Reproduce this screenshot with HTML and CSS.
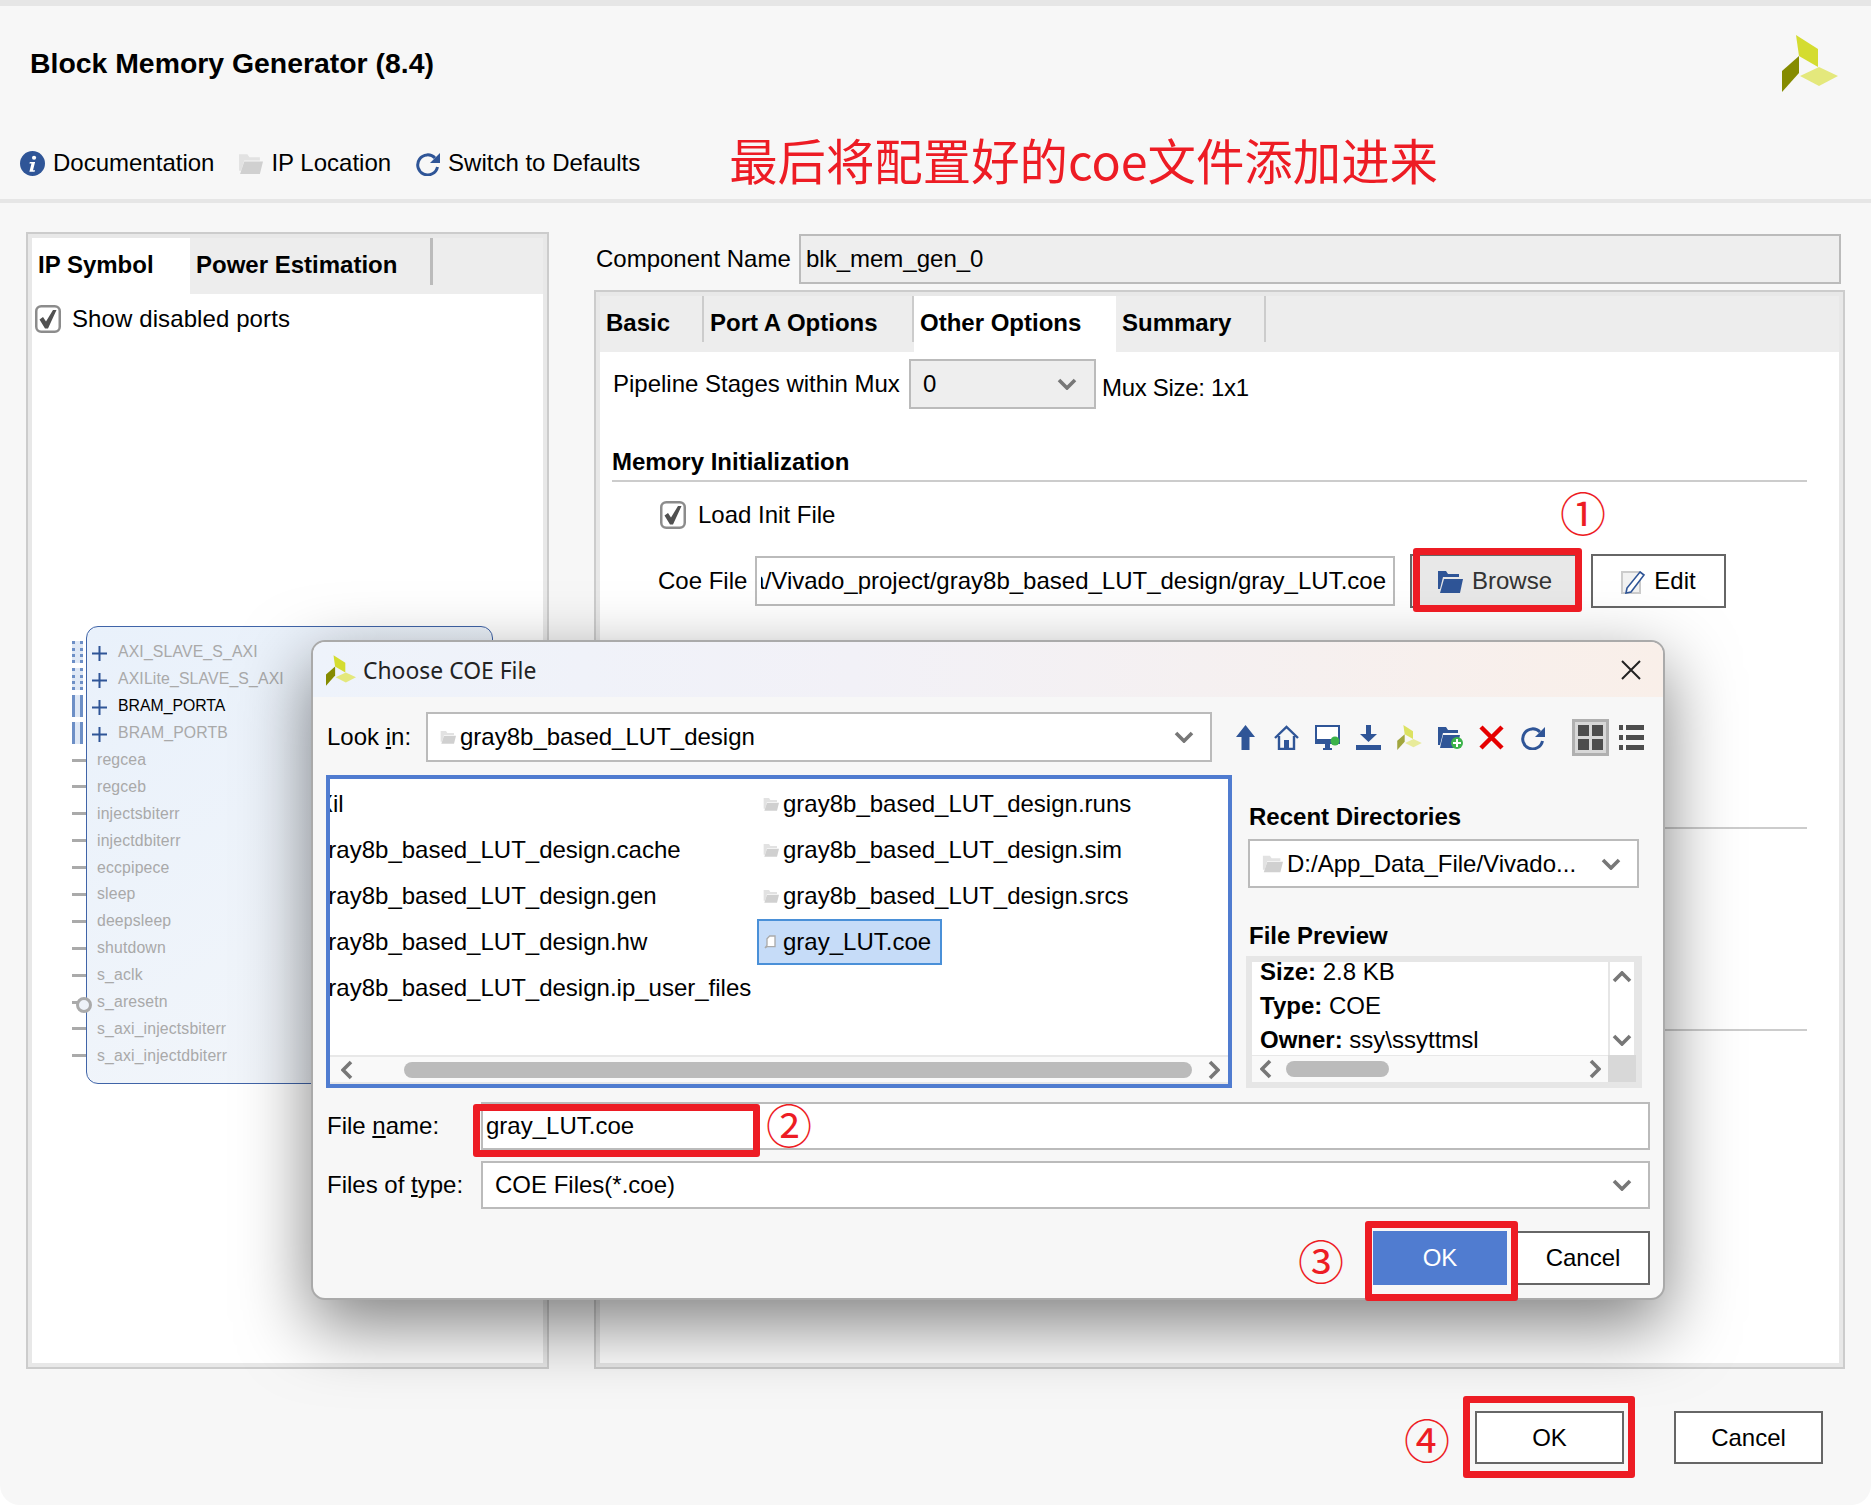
FILE: index.html
```html
<!DOCTYPE html>
<html>
    <head>
        <title>Block Memory Generator</title>
        <link rel="stylesheet" href="styles.css">
    </head>
    <body>
        <svg class="sprite" xmlns="http://www.w3.org/2000/svg">
            <symbol id="logo" viewBox="0 0 56 57">
                <polygon fill="#d4dc30" points="14,0 36,14 36,32 17,21"/>
                <polygon fill="#858b00" points="17,21 17,38 0,57 0,36"/>
                <polygon fill="#e4e87c" points="37,32 56,41 37,51 18,41"/>
            </symbol>
            <symbol id="folder-gray" viewBox="0 0 24 24">
                <path fill="#e2e2e2" d="M1 3h8l2 3h10v3H6L3 19H1z"/>
                <path fill="#d0d0d0" d="M6 10h18l-3 12H2z"/>
            </symbol>
            <symbol id="folder-blue" viewBox="0 0 25 25">
                <path fill="#2f5597" d="M0 2h8l2 3h11v3H5L2 20H0z"/>
                <path fill="#2f5597" d="M6 10h19l-3 14H2z"/>
            </symbol>
            <symbol id="chev-d" viewBox="0 0 20 12"><polyline fill="none" stroke="#777" stroke-width="3.6" points="2,2 10,10 18,2"/></symbol>
            <symbol id="chev-u" viewBox="0 0 20 12"><polyline fill="none" stroke="#777" stroke-width="3.6" points="2,10 10,2 18,10"/></symbol>
            <symbol id="chev-l" viewBox="0 0 12 20"><polyline fill="none" stroke="#777" stroke-width="3.6" points="10,2 2,10 10,18"/></symbol>
            <symbol id="chev-r" viewBox="0 0 12 20"><polyline fill="none" stroke="#777" stroke-width="3.6" points="2,2 10,10 2,18"/></symbol>
            <symbol id="check" viewBox="0 0 26 28">
                <rect x="1.250" y="1.250" width="23.500" height="25.500" rx="5" fill="#fff" stroke="#8c8c8c" stroke-width="2.500"/>
                <path fill="#505050" d="M4.500 14.500l3.500-2.500 3 4.500L18 5h3.500l-8.500 18.500h-3z"/>
            </symbol>
            <symbol id="plus" viewBox="0 0 15 15"><path fill="#2f5597" d="M6.500 0h2v6.500h6.500v2H8.500v6.500h-2V8.500H0v-2h6.500z"/></symbol>
            <symbol id="refresh" viewBox="0 0 25 25">
                <path fill="none" stroke="#2f5597" stroke-width="3" d="M20 7A10 10 0 1 0 22.500 16"/>
                <polygon fill="#2f5597" points="25,2 25,12 15,12"/>
            </symbol>
        </svg>

        <div class="window">
            <header class="head">
                <h1>Block Memory Generator (8.4)</h1>
                <svg class="logo"><use href="#logo"/></svg>
            </header>

            <div class="toolbar">
                <span class="tool">
                    <svg class="tool-icon" viewBox="0 0 24 24">
                        <circle cx="12" cy="12" r="12" fill="#2f5597"/>
                        <circle cx="13.500" cy="6.500" r="2" fill="#fff"/>
                        <path fill="#fff" d="M9.500 10.500h5l-2 8h2l-.5 1.500H9l2-8H9z"/>
                    </svg>
                    Documentation
                </span>
                <span class="tool"><svg class="tool-icon"><use href="#folder-gray"/></svg>IP Location</span>
                <span class="tool"><svg class="tool-icon"><use href="#refresh"/></svg>Switch to Defaults</span>
                <span class="note">最后将配置好的coe文件添加进来</span>
            </div>

            <div class="main">
                <section class="panel left-panel">
                    <div class="tabs">
                        <span class="tab active symbol-tab">IP Symbol</span>
                        <span class="tab power-tab">Power Estimation</span>
                    </div>
                    <div class="tab-body">
                        <label class="check-row ports-check"><svg class="checkbox"><use href="#check"/></svg>Show disabled ports</label>
                        <div class="symbol">
                            <div class="pin"><i class="stub dotted"></i><svg class="plus"><use href="#plus"/></svg><span>AXI_SLAVE_S_AXI</span></div>
                            <div class="pin"><i class="stub dotted"></i><svg class="plus"><use href="#plus"/></svg><span>AXILite_SLAVE_S_AXI</span></div>
                            <div class="pin on"><i class="stub solid"></i><svg class="plus"><use href="#plus"/></svg><span>BRAM_PORTA</span></div>
                            <div class="pin"><i class="stub solid"></i><svg class="plus"><use href="#plus"/></svg><span>BRAM_PORTB</span></div>
                            <div class="pin"><i class="dash"></i><span>regcea</span></div>
                            <div class="pin"><i class="dash"></i><span>regceb</span></div>
                            <div class="pin"><i class="dash"></i><span>injectsbiterr</span></div>
                            <div class="pin"><i class="dash"></i><span>injectdbiterr</span></div>
                            <div class="pin"><i class="dash"></i><span>eccpipece</span></div>
                            <div class="pin"><i class="dash"></i><span>sleep</span></div>
                            <div class="pin"><i class="dash"></i><span>deepsleep</span></div>
                            <div class="pin"><i class="dash"></i><span>shutdown</span></div>
                            <div class="pin"><i class="dash"></i><span>s_aclk</span></div>
                            <div class="pin"><i class="dash low"></i><span>s_aresetn</span></div>
                            <div class="pin"><i class="dash"></i><span>s_axi_injectsbiterr</span></div>
                            <div class="pin"><i class="dash"></i><span>s_axi_injectdbiterr</span></div>
                        </div>
                    </div>
                </section>

                <div class="right-col">
                    <div class="name-row">
                        <span class="name-label">Component Name</span>
                        <div class="field grey name-field">blk_mem_gen_0</div>
                    </div>
                    <section class="panel right-panel">
                        <div class="tabs">
                            <span class="tab sep basic-tab">Basic</span>
                            <span class="tab sep porta-tab">Port A Options</span>
                            <span class="tab active other-tab">Other Options</span>
                            <span class="tab sep summary-tab">Summary</span>
                        </div>
                        <div class="tab-body">
                            <div class="mux-row">
                                <span class="mux-label">Pipeline Stages within Mux</span>
                                <div class="field grey mux-select">0<svg class="chev"><use href="#chev-d"/></svg></div>
                                <span class="mux-size">Mux Size: 1x1</span>
                            </div>
                            <h3 class="section-head">Memory Initialization</h3>
                            <label class="check-row load-check"><svg class="checkbox"><use href="#check"/></svg>Load Init File</label>
                            <div class="coe-row">
                                <span class="coe-label">Coe File</span>
                                <div class="field coe-field"><span class="coe-path"><span>D:/App_Data/Vivado_project/gray8b_based_LUT_design/gray_LUT.coe</span></span></div>
                                <button class="btn browse-btn"><svg class="btn-icon"><use href="#folder-blue"/></svg>Browse</button>
                                <button class="btn edit-btn">
                                    <svg class="btn-icon" viewBox="0 0 25 25">
                                        <rect x="1" y="3" width="18" height="21" fill="#f2f2f2" stroke="#ccc" stroke-width="2"/>
                                        <path fill="#fff" stroke="#2f5597" stroke-width="1.600" d="M19 3l4 3L10 23l-5 1 1-5z"/>
                                    </svg>
                                    Edit
                                </button>
                            </div>
                            <div class="section-line first-line"></div>
                            <div class="section-line second-line"></div>
                        </div>
                    </section>
                </div>
            </div>

            <footer class="foot">
                <button class="btn foot-btn">OK</button>
                <button class="btn foot-btn">Cancel</button>
            </footer>

            <div class="dialog">
                <div class="dialog-title">
                    <svg class="dialog-logo"><use href="#logo"/></svg>
                    <span>Choose COE File</span>
                    <svg class="close" viewBox="0 0 20 20"><path stroke="#222" stroke-width="2" d="M1 1l18 18M19 1L1 19"/></svg>
                </div>
                <div class="dialog-body">
                    <div class="look-row">
                        <span class="look-label">Look <u>i</u>n:</span>
                        <div class="field combo look-combo">
                            <svg class="small-folder"><use href="#folder-gray"/></svg>gray8b_based_LUT_design
                            <svg class="chev"><use href="#chev-d"/></svg>
                        </div>
                        <div class="file-tools">
                            <svg class="ft" viewBox="0 0 25 25"><polygon fill="#2f5597" points="12.500,0 22,12 16.500,12 16.500,25 8.500,25 8.500,12 3,12"/></svg>
                            <svg class="ft" viewBox="0 0 25 25">
                                <path fill="none" stroke="#2f5597" stroke-width="2.400" d="M1 13L12.500 2 24 13M5 11v13h15V11"/>
                                <rect x="10" y="15" width="5" height="9" fill="#2f5597"/>
                            </svg>
                            <svg class="ft" viewBox="0 0 25 25">
                                <rect width="25" height="19" fill="#2f5597"/>
                                <rect x="2" y="2" width="21" height="12" fill="#fff"/>
                                <rect x="10" y="19" width="5" height="4" fill="#2f5597"/>
                                <rect x="8" y="23" width="9" height="2" fill="#2f5597"/>
                                <circle cx="20" cy="16" r="4.500" fill="#3cb34a"/>
                            </svg>
                            <svg class="ft" viewBox="0 0 25 25">
                                <rect x="10" width="5" height="9" fill="#2f5597"/>
                                <polygon fill="#2f5597" points="4,9 21,9 12.500,17"/>
                                <rect y="20" width="25" height="5" fill="#2f5597"/>
                            </svg>
                            <svg class="ft faded"><use href="#logo"/></svg>
                            <svg class="ft" viewBox="0 0 25 25">
                                <path fill="#2f5597" d="M0 2h8l2 3h10v3H5L2 20H0z"/>
                                <path fill="#2f5597" d="M5 10h17l-3 13H2z"/>
                                <circle cx="19" cy="18" r="6" fill="#3cb34a"/>
                                <path fill="#fff" d="M18 14h2v3h3v2h-3v3h-2v-3h-3v-2h3z"/>
                            </svg>
                            <svg class="ft" viewBox="0 0 25 25"><path stroke="#e60000" stroke-width="4.500" d="M2 2l21 21M23 2L2 23"/></svg>
                            <svg class="ft"><use href="#refresh"/></svg>
                            <svg class="view-grid" viewBox="0 0 37 37">
                                <rect width="37" height="37" fill="#b0b0b0"/>
                                <rect x="3" y="3" width="31" height="31" fill="#d8d8d8"/>
                                <path fill="#4d4d4d" d="M6 6h11v11H6zM20 6h11v11H20zM6 20h11v11H6zM20 20h11v11H20z"/>
                            </svg>
                            <svg class="view-list" viewBox="0 0 25 25">
                                <path fill="#4d4d4d" d="M0 0h4v5H0zM7 0h18v5H7zM0 10h4v5H0zM7 10h18v5H7zM0 20h4v5H0zM7 20h18v5H7z"/>
                            </svg>
                        </div>
                    </div>

                    <div class="browse-row">
                        <div class="file-list">
                            <div class="file-cols">
                                <div class="file-col clipped">
                                    <div class="file xil">Xil</div>
                                    <div class="file">gray8b_based_LUT_design.cache</div>
                                    <div class="file">gray8b_based_LUT_design.gen</div>
                                    <div class="file">gray8b_based_LUT_design.hw</div>
                                    <div class="file">gray8b_based_LUT_design.ip_user_files</div>
                                </div>
                                <div class="file-col">
                                    <div class="file"><svg class="file-icon"><use href="#folder-gray"/></svg>gray8b_based_LUT_design.runs</div>
                                    <div class="file"><svg class="file-icon"><use href="#folder-gray"/></svg>gray8b_based_LUT_design.sim</div>
                                    <div class="file"><svg class="file-icon"><use href="#folder-gray"/></svg>gray8b_based_LUT_design.srcs</div>
                                    <div class="file selected">
                                        <svg class="file-icon" viewBox="0 0 24 24"><path fill="#fff" stroke="#aaa" stroke-width="2" d="M10 3h8v16H6l-3 2 3-4V7z"/></svg>gray_LUT.coe
                                    </div>
                                </div>
                            </div>
                            <div class="hscroll">
                                <svg class="arrow-h"><use href="#chev-l"/></svg>
                                <div class="thumb list-thumb"></div>
                                <svg class="arrow-h"><use href="#chev-r"/></svg>
                            </div>
                        </div>

                        <div class="side">
                            <h4 class="recent-head">Recent Directories</h4>
                            <div class="field combo recent-combo">
                                <svg class="small-folder wide"><use href="#folder-gray"/></svg>D:/App_Data_File/Vivado...
                                <svg class="chev"><use href="#chev-d"/></svg>
                            </div>
                            <h4 class="preview-head">File Preview</h4>
                            <div class="preview">
                                <div class="preview-text">
                                    <div><b>Size:</b> 2.8 KB</div>
                                    <div><b>Type:</b> COE</div>
                                    <div><b>Owner:</b> ssy\ssyttmsl</div>
                                </div>
                                <div class="vscroll">
                                    <svg class="arrow-v"><use href="#chev-u"/></svg>
                                    <svg class="arrow-v"><use href="#chev-d"/></svg>
                                </div>
                                <div class="hscroll small">
                                    <svg class="arrow-h"><use href="#chev-l"/></svg>
                                    <div class="thumb preview-thumb"></div>
                                    <svg class="arrow-h"><use href="#chev-r"/></svg>
                                </div>
                                <div class="corner"></div>
                            </div>
                        </div>
                    </div>

                    <div class="form-row name-line">
                        <span class="form-label">File <u>n</u>ame:</span>
                        <div class="field form-field">gray_LUT.coe</div>
                    </div>
                    <div class="form-row type-line">
                        <span class="form-label">Files of <u>t</u>ype:</span>
                        <div class="field combo form-field type-field">COE Files(*.coe)<svg class="chev"><use href="#chev-d"/></svg></div>
                    </div>
                    <div class="dialog-buttons">
                        <button class="btn primary">OK</button>
                        <button class="btn cancel">Cancel</button>
                    </div>
                </div>
            </div>

            <!-- red annotations drawn on top of the screenshot -->
            <div class="mark mark-browse"></div>
            <div class="mark mark-name"></div>
            <div class="mark mark-ok"></div>
            <div class="mark mark-foot"></div>
            <span class="num num-1">①</span>
            <span class="num num-2">②</span>
            <span class="num num-3">③</span>
            <span class="num num-4">④</span>
        </div>
    </body>
</html>
```

FILE: styles.css
```css
* {
    margin: 0;
    padding: 0;
    box-sizing: border-box;
}

body {
    background: #fff;
    font-family: "Liberation Sans", Arial, sans-serif;
    font-size: 24px;
    color: #000;
}

svg {
    display: block;
    flex: none;
}

.sprite {
    width: 0;
    height: 0;
    position: absolute;
}

.window {
    position: relative;
    width: 1871px;
    height: 1505px;
    overflow: hidden;
    background: #f7f7f7;
    border-top: 6px solid #e6e6e6;
    border-radius: 0 0 20px 20px;
}

.head {
    display: flex;
    align-items: center;
    justify-content: space-between;
    height: 115px;
    padding: 0 33px 0 30px;
}

h1 {
    font-size: 28.4px;
    font-weight: bold;
}

.logo {
    width: 56px;
    height: 57px;
}

.toolbar {
    display: flex;
    align-items: center;
    gap: 24px;
    height: 82px;
    padding: 6px 0 0 20px;
    border-bottom: 4px solid #e6e6e6;
}

.tool {
    display: flex;
    align-items: center;
    gap: 8px;
}

.tool-icon {
    width: 25px;
    height: 25px;
}

.note {
    margin: -8px 0 0 65px;
    font-family: "Noto Sans CJK SC", sans-serif;
    font-size: 48.4px;
    line-height: 60px;
    color: #ed1c24;
}

.main {
    display: flex;
    padding: 29px 26px 0;
    gap: 45px;
}

.panel {
    display: flex;
    flex-direction: column;
    border: 2px solid #ccc;
    padding: 4px;
    background: #e8e8e8;
}

.left-panel {
    width: 523px;
    height: 1137px;
}

.tabs {
    display: flex;
    height: 56px;
    background: #ededed;
    font-weight: bold;
    flex: none;
}

.tab {
    height: 56px;
    padding: 0 0 2px 6px;
    line-height: 54px;
}

.tab.active {
    background: #fff;
}

.tab.sep {
    height: 46px;
    border-right: 2px solid #ccc;
}

.symbol-tab {
    width: 158px;
}

.power-tab {
    width: 243px;
    height: 47px;
    line-height: 54px;
    border-right: 3px solid #bbb;
}

.basic-tab {
    width: 104px;
}

.porta-tab {
    width: 210px;
}

.other-tab {
    width: 202px;
}

.summary-tab {
    width: 150px;
}

.tab-body {
    flex: 1;
    background: #fff;
}

.check-row {
    display: flex;
    align-items: center;
    height: 28px;
}

.checkbox {
    width: 26px;
    height: 28px;
    margin-right: 11px;
}

.ports-check {
    margin: 11px 0 0 3px;
    letter-spacing: 0.1px;
}

/* ip symbol block */
.symbol {
    width: 407px;
    height: 458px;
    margin: 293px 0 0 54px;
    padding-top: 12px;
    border: 1.5px solid #4064a8;
    border-radius: 12px;
    background: linear-gradient(150deg, #e9f1fb, #f3f6fa);
}

.pin {
    display: flex;
    align-items: center;
    height: 26.9px;
    margin-left: -15px;
    font-size: 15.8px;
    letter-spacing: 0.15px;
    color: #a9a9a9;
}

.pin.on {
    letter-spacing: 0;
    color: #000;
}

.stub {
    width: 11px;
    height: 22px;
    background: #dfe8f5;
}

.stub.dotted {
    border-left: 3px dotted #6d8fc6;
    border-right: 3px dotted #6d8fc6;
}

.stub.solid {
    border-left: 3px solid #6d8fc6;
    border-right: 3px solid #6d8fc6;
}

.plus {
    width: 15px;
    height: 15px;
    margin: 3px 11px 0 9px;
}

.dash {
    position: relative;
    width: 14px;
    height: 3px;
    margin-right: 11px;
    background: #aaa;
}

.dash.low::after {
    content: "";
    position: absolute;
    left: 4px;
    top: -3.5px;
    width: 10px;
    height: 10px;
    border: 3px solid #aaa;
    border-radius: 50%;
    background: #eef2f8;
}

/* right column */
.right-col {
    width: 1251px;
}

.name-row {
    display: flex;
    align-items: center;
    height: 50px;
    margin-top: 2px;
    padding-left: 2px;
}

.name-label {
    width: 203px;
}

.field {
    display: flex;
    align-items: center;
    height: 50px;
    padding-left: 5px;
    border: 2px solid #bbb;
    background: #fff;
    white-space: nowrap;
}

.field.grey {
    background: #eee;
}

.name-field {
    width: 1042px;
}

.right-panel {
    height: 1079px;
    margin-top: 6px;
}

.mux-row {
    display: flex;
    align-items: center;
    height: 50px;
    margin-top: 7px;
    padding-left: 13px;
}

.mux-label {
    width: 296px;
}

.mux-select {
    width: 187px;
    padding-left: 12px;
}

.chev {
    width: 20px;
    height: 12px;
    margin-left: auto;
}

.mux-select .chev {
    margin-right: 17px;
}

.mux-size {
    margin: 8px 0 0 6px;
    letter-spacing: -0.3px;
}

.section-head {
    width: 1195px;
    height: 34px;
    margin: 39px 0 0 12px;
    font-size: 24px;
    line-height: 28px;
    border-bottom: 2px solid #ccc;
}

.load-check {
    margin: 19px 0 0 60px;
}

.load-check .checkbox {
    margin-right: 12px;
}

.coe-row {
    display: flex;
    align-items: center;
    height: 54px;
    margin: 25px 0 0 58px;
}

.coe-label {
    width: 97px;
}

.coe-field {
    width: 640px;
    padding: 0 7px 0 4px;
}

.coe-path {
    display: flex;
    justify-content: flex-end;
    width: 100%;
    overflow: hidden;
}

.btn {
    display: flex;
    align-items: center;
    justify-content: center;
    border: 2px solid #666;
    background: #fff;
    font-family: inherit;
    font-size: 24px;
    color: #000;
}

.btn-icon {
    width: 25px;
    height: 25px;
    margin-right: 8px;
}

.browse-btn {
    width: 170px;
    height: 54px;
    margin-left: 15px;
    background: #e8e8e8;
    color: #333;
}

.browse-btn .btn-icon {
    margin-right: 9px;
}

.edit-btn {
    width: 135px;
    height: 54px;
    margin-left: 11px;
}

.section-line {
    width: 1195px;
    height: 2px;
    margin-left: 12px;
    background: #ccc;
}

.first-line {
    margin-top: 219px;
}

.second-line {
    margin-top: 200px;
}

.foot {
    display: flex;
    justify-content: flex-end;
    gap: 50px;
    margin-top: 42px;
    padding-right: 48px;
}

.foot-btn {
    width: 149px;
    height: 53px;
}

/* choose coe file dialog */
.dialog {
    position: absolute;
    left: 311px;
    top: 634px;
    z-index: 1;
    width: 1354px;
    height: 660px;
    border: 2px solid #aaa;
    border-radius: 14px;
    background: #f7f7f7;
    box-shadow: 0 25px 70px rgba(0, 0, 0, 0.5);
}

.dialog-title {
    display: flex;
    align-items: center;
    height: 55px;
    padding: 1px 22px 0 13px;
    border-radius: 12px 12px 0 0;
    background: linear-gradient(90deg, #eef3fb, #f2f1f7 40%, #f9efe9);
    font-family: "Noto Sans", sans-serif;
    font-size: 22.9px;
    color: #222;
}

.dialog-logo {
    width: 30px;
    height: 31px;
    margin-right: 7px;
}

.close {
    width: 20px;
    height: 20px;
    margin-left: auto;
}

.dialog-body {
    padding: 15px 13px 0;
}

.look-row {
    display: flex;
    align-items: center;
    height: 50px;
}

.look-label {
    width: 100px;
    padding-left: 1px;
}

.combo {
    padding-left: 12px;
}

.look-combo {
    width: 786px;
}

.look-combo .chev, .recent-combo .chev, .type-field .chev {
    margin-right: 16px;
}

.small-folder {
    width: 16px;
    height: 16px;
    margin-right: 4px;
}

.small-folder.wide {
    width: 21px;
    height: 21px;
    margin-right: 4px;
}

.file-tools {
    display: flex;
    align-items: center;
    gap: 16px;
    margin-left: 21px;
}

.ft {
    width: 25px;
    height: 25px;
}

.faded {
    opacity: 0.75;
}

.view-grid {
    width: 37px;
    height: 37px;
    margin-left: 11px;
}

.view-list {
    width: 25px;
    height: 25px;
    margin-left: -6px;
}

.browse-row {
    display: flex;
    gap: 14px;
    margin-top: 13px;
}

.file-list {
    display: flex;
    flex-direction: column;
    width: 906px;
    height: 313px;
    border: 4px solid #507cd0;
    background: #fff;
    overflow: hidden;
}

.file-cols {
    display: flex;
    flex: 1;
    padding-top: 2px;
}

.file-col {
    width: 220px;
}

.file-col.clipped {
    width: 427px;
    margin-left: -15px;
    margin-right: 15px;
}

.file {
    display: flex;
    align-items: center;
    height: 46px;
    white-space: nowrap;
}

.file.xil {
    padding-left: 2px;
}

.file-icon {
    width: 16px;
    height: 16px;
    margin: 0 4px 0 6px;
}

.selected {
    width: 185px;
    background: #c6dcf8;
    border: 2px solid #4a90d8;
}

.selected .file-icon {
    margin-left: 4px;
}

.hscroll {
    display: flex;
    align-items: center;
    justify-content: space-between;
    flex: none;
    height: 29px;
    padding: 0 8px 0 11px;
    border-top: 2px solid #e8e8e8;
    border-bottom: 2px solid #e8e8e8;
    background: #f9f9f9;
}

.arrow-h {
    width: 12px;
    height: 20px;
}

.thumb {
    height: 16px;
    border-radius: 8px;
    background: #bbb;
}

.list-thumb {
    width: 788px;
    margin-left: 34px;
}

.side {
    width: 396px;
}

h4 {
    font-size: 24px;
    line-height: 28px;
}

.recent-head {
    margin: 28px 0 0 3px;
}

.recent-combo {
    width: 391px;
    height: 49px;
    margin: 8px 0 0 2px;
}

.preview-head {
    margin: 34px 0 0 3px;
}

.preview {
    display: grid;
    grid-template-columns: 356px 28px;
    grid-template-rows: 93px 27px;
    height: 132px;
    margin-top: 6px;
    padding: 6px;
    background: #e6e6e6;
}

.preview-text {
    padding-left: 8px;
    overflow: hidden;
    background: #fff;
}

.preview-text div {
    height: 34px;
    line-height: 34px;
    white-space: nowrap;
}

.preview-text div:first-child {
    margin-top: -7px;
}

.vscroll {
    display: flex;
    flex-direction: column;
    align-items: center;
    justify-content: space-between;
    width: 24px;
    margin-left: 2px;
    padding: 9px 0;
    background: #fff;
}

.arrow-v {
    width: 20px;
    height: 12px;
}

.hscroll.small {
    height: 27px;
    padding: 0 7px 0 8px;
    border-top-width: 1px;
    border-bottom: 0;
}

.preview-thumb {
    width: 103px;
    margin: 0 auto 0 14px;
}

.corner {
    background: #d8d8d8;
}

.form-row {
    display: flex;
    align-items: center;
    height: 48px;
}

.name-line {
    margin-top: 14px;
}

.name-line .form-field {
    padding-left: 3px;
}

.type-line {
    margin-top: 11px;
}

.form-label {
    width: 155px;
    padding-left: 1px;
}

.form-field {
    width: 1169px;
    height: 48px;
}

.dialog-buttons {
    display: flex;
    justify-content: flex-end;
    gap: 9px;
    margin-top: 22px;
}

.dialog-buttons .btn {
    width: 134px;
    height: 54px;
}

.btn.primary {
    border: 0;
    background: #507cd0;
    color: #fff;
}

/* red marks */
.mark {
    position: absolute;
    z-index: 2;
    border: 7px solid #ed1c24;
    border-radius: 3px;
}

.mark-browse {
    left: 1413px;
    top: 542px;
    width: 169px;
    height: 64px;
}

.mark-name {
    left: 473px;
    top: 1098px;
    width: 287px;
    height: 53px;
}

.mark-ok {
    left: 1365px;
    top: 1215px;
    width: 153px;
    height: 80px;
}

.mark-foot {
    left: 1463px;
    top: 1390px;
    width: 172px;
    height: 82px;
}

.num {
    position: absolute;
    z-index: 2;
    width: 50px;
    height: 60px;
    font-family: "Noto Sans CJK SC", sans-serif;
    font-size: 46px;
    line-height: 60px;
    text-align: center;
    color: #ed1c24;
}

.num-1 {
    left: 1558px;
    top: 475px;
}

.num-2 {
    left: 764px;
    top: 1087px;
}

.num-3 {
    left: 1296px;
    top: 1223px;
}

.num-4 {
    left: 1402px;
    top: 1402px;
}
```
